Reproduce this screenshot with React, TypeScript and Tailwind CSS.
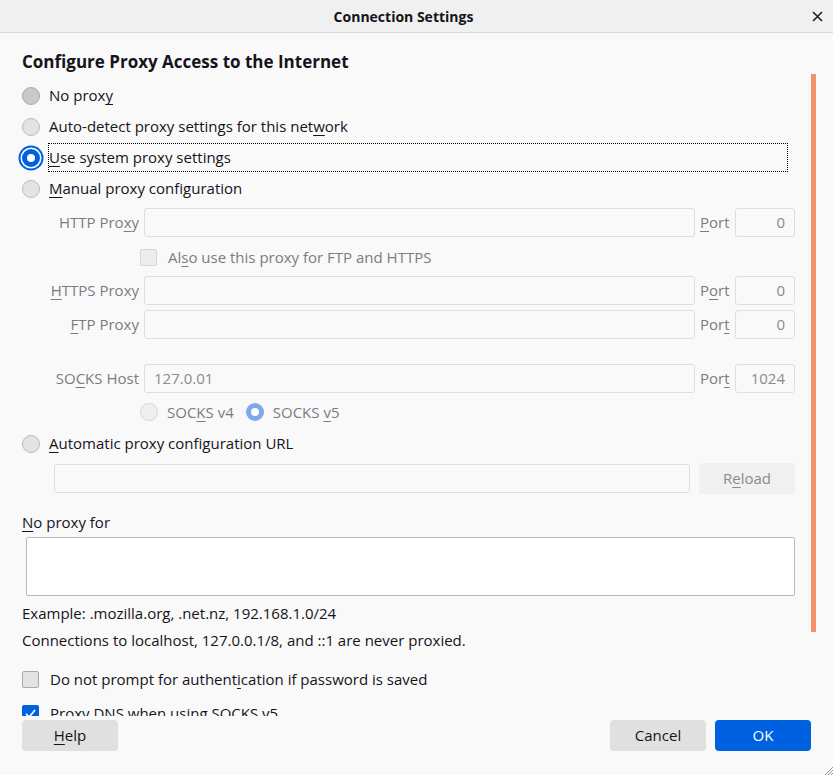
import type { ReactNode } from "react";

const font = { fontFamily: '"Open Sans", "Noto Sans", "Liberation Sans", sans-serif' };

//*----------------- small helpers -----------------*//
function U({ children }: { children: ReactNode }) {
    return <span className="underline underline-offset-[3px] decoration-1">{children}</span>;
}

type RadioKind = "normal" | "hover" | "checkedFocus" | "disabled" | "disabledChecked";

function Radio({ kind }: { kind: RadioKind }) {
    if (kind === "checkedFocus") {
        return (
            <span className="block w-[18px] h-[18px] shrink-0 rounded-full border-[5px] border-[#0061e0] bg-white ring-2 ring-[#0061e0] ring-offset-[1.5px] ring-offset-white" />
        );
    }
    if (kind === "disabledChecked") {
        return <span className="block w-[18px] h-[18px] shrink-0 rounded-full border-[5px] border-[#7fa9ec] bg-white" />;
    }
    if (kind === "hover") {
        return <span className="block w-[18px] h-[18px] shrink-0 rounded-full border border-[#a9a9a9] bg-[#c9c9c9]" />;
    }
    if (kind === "disabled") {
        return <span className="block w-[18px] h-[18px] shrink-0 rounded-full border border-[#d8d8d8] bg-[#efefef]" />;
    }
    return <span className="block w-[18px] h-[18px] shrink-0 rounded-full border border-[#bcbcbc] bg-[#e3e3e3]" />;
}

function Field({ value, align = "left" }: { value?: string; align?: "left" | "right" }) {
    return (
        <div
            className={`h-[29px] flex items-center px-[9px] rounded-[3px] border border-[#dedede] bg-[#f9f9f9] text-[#8a8a8e] text-[15px] ${
                align === "right" ? "justify-end" : "justify-start"
            }`}>
            {value}
        </div>
    );
}

function ProxyRow({ label, port, host = "", portValue = "0" }: { label: ReactNode; port: ReactNode; host?: string; portValue?: string }) {
    return (
        <div className="flex items-center h-[29px]">
            <div className="w-[122px] pr-[5px] text-right text-[#7c7c80] text-[15px] whitespace-nowrap">{label}</div>
            <div className="flex-1">
                <Field value={host} />
            </div>
            <div className="w-[40px] pl-[5px] text-[#7c7c80] text-[15px]">{port}</div>
            <div className="w-[60px]">
                <Field value={portValue} align="right" />
            </div>
        </div>
    );
}

export default function App() {
    return (
        <div style={font} className="relative w-[833px] h-[775px] bg-[#f9f9f9] text-[#15141a] flex flex-col overflow-hidden">
            {/*----------------- title bar -----------------*/}
            <div className="relative h-[33px] shrink-0 bg-[#f0f0f0] border-b border-[#d8d8dc] flex items-center justify-center pr-[26px]">
                <span className="font-bold text-[14px]">Connection Settings</span>
                <svg className="absolute right-[10px] top-[11px]" width="11" height="11" viewBox="0 0 11 11">
                    <path d="M1 1 L10 10 M10 1 L1 10" stroke="#202020" strokeWidth="1.6" />
                </svg>
            </div>

            {/*----------------- scrolling content -----------------*/}
            <div className="relative h-[683px] shrink-0 overflow-hidden">
                <div className="pl-[22px] pr-[38px] pt-[18px] text-[15px]">
                    <h1 className="h-[22px] leading-[22px] font-bold text-[17px]">Configure Proxy Access to the Internet</h1>

                    <div className="mt-[7px]">
                        <div className="h-[31px] flex items-center gap-[9px]">
                            <Radio kind="hover" />
                            <span>
                                No prox<U>y</U>
                            </span>
                        </div>
                        <div className="h-[31px] flex items-center gap-[9px]">
                            <Radio kind="normal" />
                            <span>
                                Auto-detect proxy settings for this net<U>w</U>ork
                            </span>
                        </div>
                        <div className="h-[31px] flex items-center gap-[8px]">
                            <Radio kind="checkedFocus" />
                            <span className="flex-1 mr-[7px] h-[29px] flex items-center border border-dotted border-black">
                                <U>U</U>se system proxy settings
                            </span>
                        </div>
                        <div className="h-[31px] flex items-center gap-[9px]">
                            <Radio kind="normal" />
                            <span>
                                <U>M</U>anual proxy configuration
                            </span>
                        </div>
                    </div>

                    {/*----------------- manual proxy fields -----------------*/}
                    <div className="mt-[4px]">
                        <ProxyRow label={<>HTTP Pro<U>x</U>y</>} port={<><U>P</U>ort</>} />
                    </div>
                    <div className="mt-[8px] h-[24px] flex items-center gap-[11px] pl-[118px]">
                        <span className="w-[17px] h-[17px] rounded-[2px] border border-[#d6d6d6] bg-[#ececec]" />
                        <span className="text-[#7c7c80] text-[15px]">
                            Al<U>s</U>o use this proxy for FTP and HTTPS
                        </span>
                    </div>
                    <div className="mt-[7px]">
                        <ProxyRow label={<><U>H</U>TTPS Proxy</>} port={<>P<U>o</U>rt</>} />
                    </div>
                    <div className="mt-[5px]">
                        <ProxyRow label={<><U>F</U>TP Proxy</>} port={<>Por<U>t</U></>} />
                    </div>
                    <div className="mt-[25px]">
                        <ProxyRow label={<>SO<U>C</U>KS Host</>} port={<>Por<U>t</U></>} host="127.0.01" portValue="1024" />
                    </div>
                    <div className="mt-[7px] h-[24px] flex items-center pl-[118px] text-[#7c7c80] text-[15px]">
                        <Radio kind="disabled" />
                        <span className="ml-[9px]">
                            SOC<U>K</U>S v4
                        </span>
                        <div className="ml-[12px] flex items-center">
                            <Radio kind="disabledChecked" />
                        </div>
                        <span className="ml-[9px]">
                            SOCKS <U>v</U>5
                        </span>
                    </div>

                    <div className="mt-[4px] h-[31px] flex items-center gap-[9px]">
                        <Radio kind="normal" />
                        <span>
                            <U>A</U>utomatic proxy configuration URL
                        </span>
                    </div>
                    <div className="mt-[4px] h-[31px] flex items-center pl-[32px]">
                        <div className="flex-1">
                            <Field />
                        </div>
                        <div className="ml-[9px] w-[96px] h-[31px] rounded-[4px] bg-[#f0f0f0] flex items-center justify-center text-[#8a8a8e] text-[15px]">
                            R<U>e</U>load
                        </div>
                    </div>

                    <div className="mt-[18px] h-[20px] leading-[20px]">
                        <U>N</U>o proxy for
                    </div>
                    <div className="mt-[5px] ml-[4px] h-[59px] rounded-[2px] border border-[#b9b9b9] bg-white" />

                    <div className="mt-[7px] h-[20px] leading-[20px]">Example: .mozilla.org, .net.nz, 192.168.1.0/24</div>
                    <div className="mt-[7px] h-[20px] leading-[20px]">
                        Connections to localhost, 127.0.0.1/8, and ::1 are never proxied.
                    </div>

                    <div className="mt-[17px] h-[24px] flex items-center gap-[11px]">
                        <span className="w-[17px] h-[17px] rounded-[2px] border border-[#a9a9a9] bg-[#e3e3e3]" />
                        <span>
                            Do not prompt for authent<U>i</U>cation if password is saved
                        </span>
                    </div>
                    <div className="mt-[10px] h-[24px] flex items-center gap-[11px]">
                        <span className="w-[17px] h-[17px] rounded-[2px] bg-[#0061e0] flex items-center justify-center">
                            <svg width="13" height="13" viewBox="0 0 13 13">
                                <path d="M2 6.8 L5.2 10 L11 3" fill="none" stroke="white" strokeWidth="1.7" />
                            </svg>
                        </span>
                        <span>
                            Proxy <U>D</U>NS when using SOCKS v5
                        </span>
                    </div>
                </div>

                {/* scrollbar thumb overlay */}
                <div className="absolute left-[811px] top-[41px] w-[5px] h-[558px] bg-[#f4916b]" />
            </div>

            {/*----------------- footer buttons -----------------*/}
            <div className="flex items-start pt-[4px] px-[22px] text-[15px]">
                <button className="w-[96px] h-[31px] rounded-[4px] bg-[#e0e0e0]">
                    <U>H</U>elp
                </button>
                <div className="flex-1" />
                <button className="w-[96px] h-[31px] rounded-[4px] bg-[#e0e0e0]">Cancel</button>
                <button className="ml-[9px] w-[96px] h-[31px] rounded-[4px] bg-[#0061e0] text-white">OK</button>
            </div>

            {/* resize grip */}
            <svg className="absolute right-0 bottom-0" width="9" height="9" viewBox="0 0 9 9">
                <path d="M9 1 L1 9 M9 4 L4 9 M9 7 L7 9" stroke="#9a9a9a" strokeWidth="1" />
            </svg>
        </div>
    );
}
